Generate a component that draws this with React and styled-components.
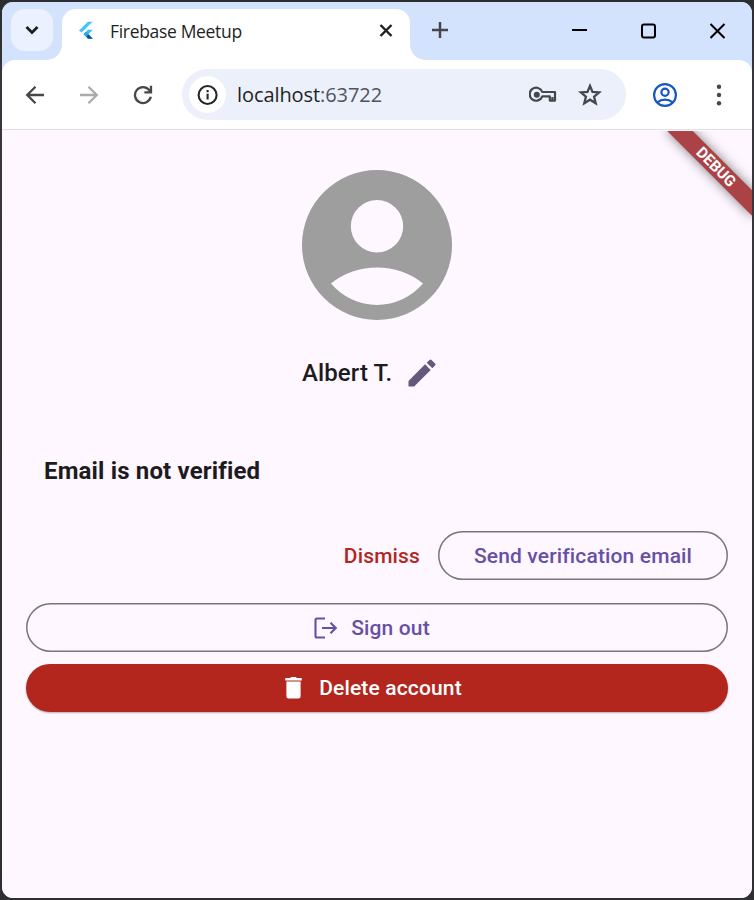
import React from "react";
import styled, { createGlobalStyle, css } from "styled-components";

const GlobalStyle = createGlobalStyle`
  * { box-sizing: border-box; }
  body { margin: 0; background: #2b2b30; }
  button { font: inherit; border: 0; padding: 0; margin: 0; background: none; }
  svg { display: block; flex: none; }
`;

const Desktop = styled.div`
  width: 754px;
  height: 900px;
  padding: 2px;
  background: linear-gradient(#2b2d31, #38373d 10%, #2f2e33);
`;

const BrowserWindow = styled.div`
  height: 896px;
  display: flex;
  flex-direction: column;
  border-radius: 11px;
  overflow: hidden;
  background: #d3e2fd;
`;

const TabStrip = styled.header`
  height: 58px;
  flex: none;
  display: flex;
  background: #d3e2fd;
`;

const TabSearch = styled.button`
  width: 42px;
  height: 42px;
  margin: 7px 9px 0;
  border-radius: 14px;
  background: #ebf1fe;
  display: grid;
  place-items: center;
`;

const Tab = styled.div`
  position: relative;
  width: 348px;
  height: 51px;
  margin-top: 7px;
  padding: 0 16px 7px 15px;
  display: flex;
  align-items: center;
  background: #fff;
  border-radius: 14px 14px 0 0;

  &::before,
  &::after {
    content: "";
    position: absolute;
    bottom: 0;
    width: 15px;
    height: 15px;
  }
  &::before {
    left: -15px;
    background: radial-gradient(circle at 0 0, transparent 14.5px, #fff 15px);
  }
  &::after {
    right: -15px;
    background: radial-gradient(circle at 100% 0, transparent 14.5px, #fff 15px);
  }
`;

const TabTitle = styled.span`
  flex: 1;
  margin-left: 15px;
  font: 400 17.5px/24px "Open Sans", "Noto Sans", sans-serif;
  letter-spacing: -0.32px;
  color: #1f1f1f;
  white-space: nowrap;
`;

const NewTab = styled.button`
  width: 42px;
  height: 56px;
  margin-left: 9px;
  display: grid;
  place-items: center;
`;

const WindowControls = styled.div`
  margin-left: auto;
  display: flex;
`;

const WindowButton = styled.button`
  width: 69px;
  height: 58px;
  display: grid;
  place-items: center;
`;

const Toolbar = styled.nav`
  height: 70px;
  flex: none;
  display: flex;
  align-items: center;
  padding: 0 6px;
  background: #fff;
  border-bottom: 1px solid #dfe0e3;
  border-radius: 13px 13px 0 0;
`;

const ToolButton = styled.button`
  width: 54px;
  height: 54px;
  display: grid;
  place-items: center;
`;

const AddressBar = styled.div`
  width: 444px;
  height: 51px;
  margin: 0 12px;
  padding: 0 24px 0 7px;
  display: flex;
  align-items: center;
  border-radius: 26px;
  background: #ebf0fa;
`;

const SiteInfo = styled.span`
  width: 37px;
  height: 37px;
  border-radius: 50%;
  background: #fff;
  display: grid;
  place-items: center;
`;

const Url = styled.span`
  flex: 1;
  margin-left: 11px;
  font: 400 20px/28px "Open Sans", "Noto Sans", sans-serif;
  letter-spacing: -0.08px;
  color: #1f1f1f;
  white-space: nowrap;
`;

const Port = styled.span`
  color: #50535a;
`;

const AddressIcons = styled.span`
  display: flex;
  align-items: center;
  gap: 21px;
`;

const Page = styled.main`
  position: relative;
  flex: 1;
  overflow: hidden;
  padding: 40px 24px 0;
  display: flex;
  flex-direction: column;
  background: #fef7ff;
  font-family: Roboto, sans-serif;
`;

const RibbonArea = styled.div`
  position: absolute;
  top: 1px;
  right: 0;
  width: 110px;
  height: 110px;
  overflow: hidden;
`;

const Ribbon = styled.div`
  position: absolute;
  top: 27px;
  right: -24px;
  width: 120px;
  height: 18px;
  transform: rotate(45deg);
  background: #ab4246;
  box-shadow: 0 0 12px rgba(0, 0, 0, 0.5);
  color: #fff;
  font-size: 15.3px;
  font-weight: 700;
  line-height: 18px;
  text-align: center;
`;

const Avatar = styled.svg`
  align-self: center;
  width: 150px;
  height: 150px;
`;

const NameRow = styled.div`
  display: flex;
  align-items: center;
  height: 36px;
  margin: 35px 0 0 276px;
  gap: 12px;
`;

const Name = styled.span`
  font-size: 24px;
  font-weight: 500;
  line-height: 36px;
  letter-spacing: 0.1px;
  color: #1d1b20;
`;

const Notice = styled.h2`
  margin: 62px 0 0 18px;
  font-size: 24px;
  font-weight: 700;
  line-height: 36px;
  letter-spacing: 0.15px;
  color: #1d1b20;
`;

const NoticeActions = styled.div`
  display: flex;
  justify-content: flex-end;
  align-items: center;
  gap: 18px;
  margin-top: 42px;
`;

const buttonText = css`
  font-family: Roboto, sans-serif;
  font-size: 21px;
  font-weight: 500;
  line-height: 30px;
  letter-spacing: 0.15px;
`;

const TextButton = styled.button`
  ${buttonText}
  color: #b3261e;
`;

const PillButton = styled.button`
  ${buttonText}
  height: ${(p) => (p.$filled ? 48 : 49)}px;
  width: ${(p) => p.$width || "100%"};
  margin-top: ${(p) => p.$top || 0}px;
  padding: ${(p) => (p.$filled ? 0 : 1)}px ${(p) => p.$trail || 0}px 0 0;
  display: flex;
  align-items: center;
  justify-content: center;
  gap: 12px;
  border-radius: 24.5px;
  ${(p) =>
    p.$filled
      ? css`
          background: #b3261e;
          color: #fff;
          box-shadow: 0 1px 2px rgba(0, 0, 0, 0.3);
        `
      : css`
          box-shadow: inset 0 0 0 1.5px #79747e;
          color: #6750a4;
        `}
`;

const FlutterLogo = () => (
  <svg width="18" height="20" viewBox="0 0 18 20">
    <path d="M11 .8h4.600L4.600 11.600 2 9.400z" fill="#45c4f9" />
    <path d="M11 8.800h4.800l-4.400 4.400 4.400 4.400H11l-4.500-4.400z" fill="#3fbdf4" />
    <path d="M9.100 15.600l2.300-2.400 4.400 4.600H11z" fill="#09519b" />
    <path d="M6.500 13.200L9.100 10.600l2.400 2.600-2.400 2.400z" fill="#29a5ee" />
  </svg>
);

const Stroke = ({ w, h, d, color = "#45474a", width = 2.3, children, ...rest }) => (
  <svg
    width={w}
    height={h}
    viewBox={`0 0 ${w} ${h}`}
    fill="none"
    stroke={color}
    strokeWidth={width}
    {...rest}
  >
    {d && <path d={d} />}
    {children}
  </svg>
);

export default function App() {
  return (
    <Desktop>
      <GlobalStyle />
      <BrowserWindow>
        <TabStrip>
          <TabSearch aria-label="Search tabs">
            <Stroke w={14} h={10} d="M1.5 2L7 7.5 12.5 2" color="#1f1f1f" width={2.7} />
          </TabSearch>
          <Tab>
            <FlutterLogo />
            <TabTitle>Firebase Meetup</TabTitle>
            <Stroke w={16} h={16} d="M2.500 2l11 11M13.500 2l-11 11" color="#1f1f1f" width={2.4} />
          </Tab>
          <NewTab aria-label="New tab">
            <Stroke w={16} h={16} d="M8 0v16M0 8h16" width={2.5} />
          </NewTab>
          <WindowControls>
            <WindowButton aria-label="Minimize">
              <Stroke w={16} h={16} d="M0 7h15" color="#000" width={2} />
            </WindowButton>
            <WindowButton aria-label="Maximize">
              <Stroke w={16} h={16} color="#000" width={2}>
                <rect x="1" y="1.500" width="13" height="13" rx="2" />
              </Stroke>
            </WindowButton>
            <WindowButton aria-label="Close">
              <Stroke w={16} h={16} d="M.500 1l14 14M14.500 1l-14 14" color="#000" width={2} />
            </WindowButton>
          </WindowControls>
        </TabStrip>

        <Toolbar>
          <ToolButton aria-label="Back">
            <Stroke w={20} h={20} d="M19 10H2.500M10.500 1.700L2.200 10l8.300 8.300" />
          </ToolButton>
          <ToolButton aria-label="Forward">
            <Stroke w={20} h={20} d="M1 10h16.500M9.500 1.700l8.300 8.300-8.300 8.300" color="#ababab" />
          </ToolButton>
          <ToolButton aria-label="Reload">
            <Stroke w={20} h={20} d="M17.800 11.800A8 8 0 1 1 16.200 5L18 7.200M18 .8v6.600h-6.600" />
          </ToolButton>
          <AddressBar>
            <SiteInfo>
              <Stroke w={22} h={22} color="#242529" width={2.1}>
                <circle cx="10.600" cy="11" r="9" />
                <path d="M10.600 9.800v5.600M10.600 6v2.200" />
              </Stroke>
            </SiteInfo>
            <Url>
              localhost<Port>:63722</Port>
            </Url>
            <AddressIcons>
              <Stroke w={28} h={18} width={2.2}>
                <path
                  d="M13.300 6H26v8.600h-5.200v-4.200h-7.500A6.500 6.500 0 1 1 13.300 6zM23.400 11v3"
                  strokeLinejoin="round"
                />
                <circle cx="7.800" cy="8.800" r="3" fill="#45474a" stroke="none" />
              </Stroke>
              <Stroke
                w={24}
                h={24}
                d="M12 2.900l2.500 6 6.700.5-5.100 4.300 1.600 6.500-5.700-3.500-5.700 3.500 1.600-6.500-5.100-4.300 6.700-.5z"
                width={2.3}
              />
            </AddressIcons>
          </AddressBar>
          <ToolButton aria-label="Profile">
            <Stroke w={26} h={26} color="#1558c0" width={2.2}>
              <circle cx="13" cy="13" r="10.900" />
              <circle cx="13" cy="10.300" r="3.600" />
              <path d="M5.400 20.300c4.500-3.600 10.700-3.600 15.200 0" />
            </Stroke>
          </ToolButton>
          <ToolButton aria-label="Menu">
            <svg width="6" height="22" viewBox="0 0 6 22" fill="#45474a">
              <circle cx="3" cy="2.800" r="2.200" />
              <circle cx="3" cy="11" r="2.200" />
              <circle cx="3" cy="19.200" r="2.200" />
            </svg>
          </ToolButton>
        </Toolbar>

        <Page>
          <Avatar viewBox="0 0 150 150" fill="#9e9e9e">
            <path
              fillRule="evenodd"
              d="M75 0a75 75 0 1 1 0 150A75 75 0 0 1 75 0zM75 30a26.200 26.200 0 1 0 0 52.400A26.200 26.200 0 0 0 75 30zM29 113.500a74 74 0 0 1 92 0a60 60 0 0 1-92 0z"
            />
          </Avatar>
          <NameRow>
            <Name>Albert T.</Name>
            <svg width="36" height="36" viewBox="0 0 24 24" fill="#65587a">
              <path d="M3 17.250V21h3.750L17.810 9.940l-3.750-3.750L3 17.250zM20.710 7.040a1 1 0 0 0 0-1.410l-2.340-2.340a1 1 0 0 0-1.410 0l-1.830 1.830 3.750 3.750 1.830-1.830z" />
            </svg>
          </NameRow>
          <Notice>Email is not verified</Notice>
          <NoticeActions>
            <TextButton>Dismiss</TextButton>
            <PillButton $width="290px">Send verification email</PillButton>
          </NoticeActions>
          <PillButton $top={23} $trail={12}>
            <Stroke w={27} h={27} color="#6750a4" width={2.1}>
              <path d="M13 3.500H5A1.500 1.500 0 0 0 3.500 5v16A1.500 1.500 0 0 0 5 22.500h8" />
              <path d="M10 13h14M18.500 7.700l5.300 5.300-5.300 5.300" />
            </Stroke>
            Sign out
          </PillButton>
          <PillButton $top={12} $trail={12} $filled>
            <svg width="27" height="27" viewBox="0 0 27 27" fill="#fff">
              <path d="M5.900 3h4.300l1.100-.9h4.400l1.100.9h4.300q.7 0 .7.700v1.700H5.200V3.700q0-.7.700-.7zM6.400 6.600h14.200v14.600a2.200 2.200 0 0 1-2.200 2.200H8.600a2.200 2.200 0 0 1-2.200-2.200z" />
            </svg>
            Delete account
          </PillButton>
          <RibbonArea>
            <Ribbon>DEBUG</Ribbon>
          </RibbonArea>
        </Page>
      </BrowserWindow>
    </Desktop>
  );
}
